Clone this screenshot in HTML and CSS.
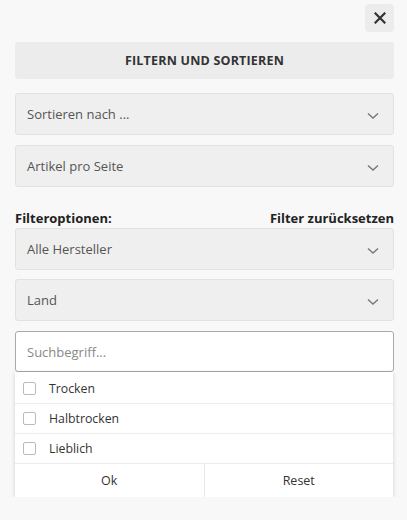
FILE: index.html
```html
<!DOCTYPE html>
<html lang="de">
<head>
 <meta charset="UTF-8">
 <meta name="viewport" content="width=device-width, initial-scale=1.0">
 <title>Filtern und Sortieren</title>
 <link rel="stylesheet" href="styles.css">
</head>
<body>
 <div class="panel">
   <div class="top">
     <div class="close">
       <svg width="12" height="12" viewBox="0 0 12 12"><path d="M1.5 1.5 L10.5 10.5 M10.5 1.5 L1.5 10.5" stroke="#333" stroke-width="2.2" stroke-linecap="square"/></svg>
     </div>
   </div>
   <div class="title">FILTERN UND SORTIEREN</div>

   <div class="select first">
     <span>Sortieren nach ...</span>
     <svg class="chev" width="12" height="8" viewBox="0 0 12 8"><path d="M1 1.5 L6 6 L11 1.5" fill="none" stroke="#777" stroke-width="1.4"/></svg>
   </div>
   <div class="select">
     <span>Artikel pro Seite</span>
     <svg class="chev" width="12" height="8" viewBox="0 0 12 8"><path d="M1 1.5 L6 6 L11 1.5" fill="none" stroke="#777" stroke-width="1.4"/></svg>
   </div>

   <div class="labels">
     <span>Filteroptionen:</span>
     <span>Filter zurücksetzen</span>
   </div>

   <div class="select tight">
     <span>Alle Hersteller</span>
     <svg class="chev" width="12" height="8" viewBox="0 0 12 8"><path d="M1 1.5 L6 6 L11 1.5" fill="none" stroke="#777" stroke-width="1.4"/></svg>
   </div>
   <div class="select near">
     <span>Land</span>
     <svg class="chev" width="12" height="8" viewBox="0 0 12 8"><path d="M1 1.5 L6 6 L11 1.5" fill="none" stroke="#777" stroke-width="1.4"/></svg>
   </div>

   <div class="search">Suchbegriff...</div>
   <div class="dropdown">
     <div class="option"><span class="box"></span>Trocken</div>
     <div class="option"><span class="box"></span>Halbtrocken</div>
     <div class="option"><span class="box"></span>Lieblich</div>
     <div class="actions">
       <div class="act">Ok</div>
       <div class="act">Reset</div>
     </div>
   </div>
 </div>
</body>
</html>
```

FILE: styles.css
```css
body {
  margin: 0;
  background-color: #f8f8f8;
  font-family: "Open Sans", "Liberation Sans", sans-serif;
  color: #555;
}
.panel {
  width: 379px;
  padding: 4px 0 0 15px;
}
.top {
  display: flex;
  justify-content: flex-end;
}
.close {
  width: 29px;
  height: 28px;
  background-color: #ececec;
  border-radius: 4px;
  display: flex;
  align-items: center;
  justify-content: center;
}
.title {
  margin-top: 10px;
  height: 37px;
  background-color: #ececec;
  border-radius: 3px;
  display: flex;
  align-items: center;
  justify-content: center;
  font-size: 12.5px;
  font-weight: 700;
  color: #333;
  letter-spacing: 0.2px;
}
.select {
  box-sizing: border-box;
  height: 42px;
  margin-top: 10px;
  background-color: #efefef;
  border: 1px solid #e2e2e2;
  border-radius: 3px;
  display: flex;
  align-items: center;
  justify-content: space-between;
  padding: 0 14px 0 11px;
  font-size: 13px;
  color: #555;
}
.select.first {
  margin-top: 14px;
}
.select.tight {
  margin-top: 2px;
}
.select.near {
  margin-top: 9px;
}
.chev {
  margin-top: 4px;
}
.labels {
  margin-top: 23px;
  display: flex;
  justify-content: space-between;
  font-size: 13px;
  font-weight: 700;
  color: #222;
  line-height: 16px;
}
.search {
  box-sizing: border-box;
  height: 41px;
  margin-top: 10px;
  background-color: #fff;
  border: 1px solid #a9a9a9;
  border-radius: 3px;
  display: flex;
  align-items: center;
  padding-left: 11px;
  font-size: 13px;
  color: #888;
}
.dropdown {
  width: 378px;
  background-color: #fff;
  box-shadow: 0 1px 4px rgba(0, 0, 0, 0.18);
  padding-top: 2px;
}
.option {
  height: 29px;
  border-bottom: 1px solid #ececec;
  display: flex;
  align-items: center;
  padding-left: 8px;
  font-size: 12.3px;
  color: #333;
}
.box {
  box-sizing: border-box;
  width: 13px;
  height: 13px;
  border: 1px solid #bbb;
  border-radius: 2px;
  margin-right: 13px;
}
.actions {
  display: flex;
  height: 33px;
}
.act {
  flex: 1;
  display: flex;
  align-items: center;
  justify-content: center;
  font-size: 12.5px;
  color: #333;
}
.act + .act {
  border-left: 1px solid #e8e8e8;
}
```
